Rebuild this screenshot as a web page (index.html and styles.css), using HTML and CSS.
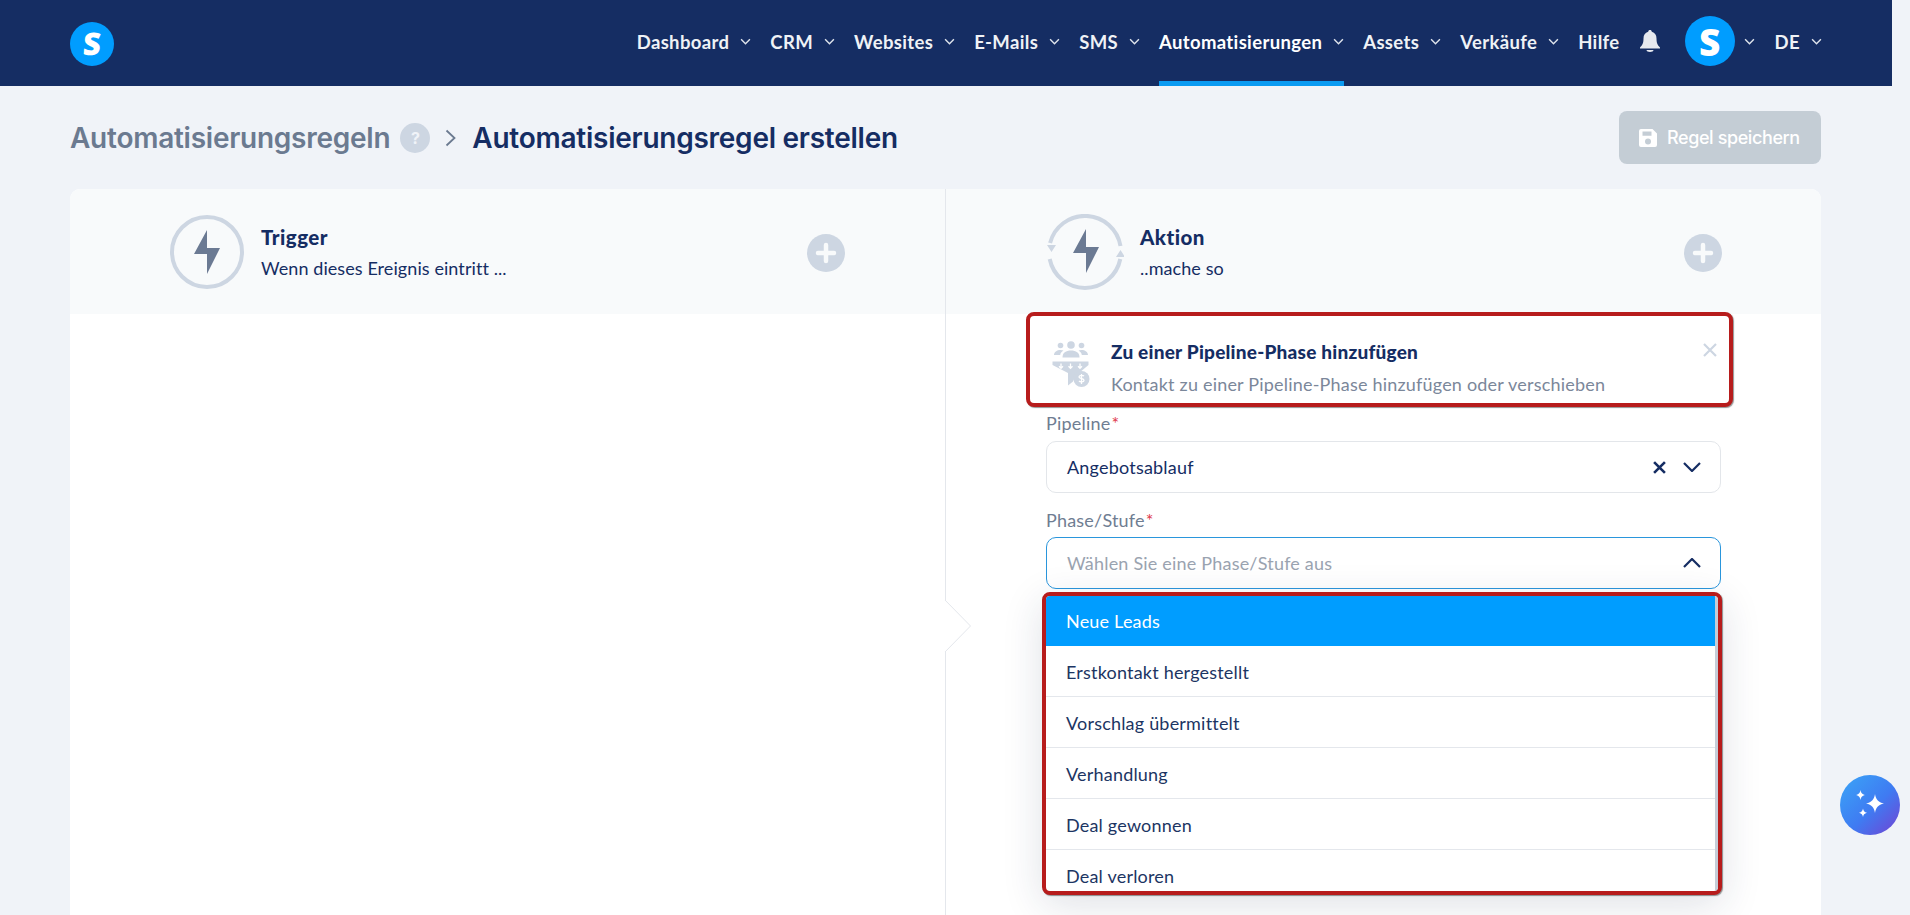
FILE: index.html
```html
<!DOCTYPE html>
<html lang="de">
<head>
<meta charset="utf-8">
<title>Automatisierungsregel erstellen</title>
<link rel="stylesheet" href="styles.css">
</head>
<body>
<div class="page">
  <header class="topbar">
    <div class="logo"><span class="logo-s">S</span></div>
    <nav class="nav">
      <a class="nav-item"><span>Dashboard</span><svg class="chev" viewBox="0 0 10 6"><path d="M1 1l4 4 4-4"/></svg></a>
      <a class="nav-item"><span>CRM</span><svg class="chev" viewBox="0 0 10 6"><path d="M1 1l4 4 4-4"/></svg></a>
      <a class="nav-item"><span>Websites</span><svg class="chev" viewBox="0 0 10 6"><path d="M1 1l4 4 4-4"/></svg></a>
      <a class="nav-item"><span>E-Mails</span><svg class="chev" viewBox="0 0 10 6"><path d="M1 1l4 4 4-4"/></svg></a>
      <a class="nav-item"><span>SMS</span><svg class="chev" viewBox="0 0 10 6"><path d="M1 1l4 4 4-4"/></svg></a>
      <a class="nav-item active"><span>Automatisierungen</span><svg class="chev" viewBox="0 0 10 6"><path d="M1 1l4 4 4-4"/></svg></a>
      <a class="nav-item"><span>Assets</span><svg class="chev" viewBox="0 0 10 6"><path d="M1 1l4 4 4-4"/></svg></a>
      <a class="nav-item"><span>Verkäufe</span><svg class="chev" viewBox="0 0 10 6"><path d="M1 1l4 4 4-4"/></svg></a>
      <a class="nav-item"><span>Hilfe</span></a>
      <svg class="bell" viewBox="0 0 20 22"><path d="M10 0c1 0 1.700.7 1.800 1.700C15 2.500 16.500 5 16.500 8.500c0 4.500 1 6.500 3.500 9v1H0v-1c2.500-2.500 3.500-4.500 3.500-9C3.500 5 5 2.500 8.200 1.700 8.300.7 9 0 10 0z"/><path d="M6.500 20h7c0 1.200-1.500 2-3.500 2s-3.500-.8-3.500-2z"/></svg>
      <div class="avatar"><span class="avatar-s">S</span></div>
      <a class="nav-item lang-chev"><svg class="chev" viewBox="0 0 10 6"><path d="M1 1l4 4 4-4"/></svg></a>
      <a class="nav-item"><span>DE</span><svg class="chev" viewBox="0 0 10 6"><path d="M1 1l4 4 4-4"/></svg></a>
    </nav>
  </header>

  <div class="titlebar">
    <div class="crumbs">
      <span class="crumb-parent">Automatisierungsregeln</span>
      <span class="help">?</span>
      <svg class="crumb-sep" viewBox="0 0 11 18"><path d="M1.500 1.500L9.500 9l-8 7.500"/></svg>
      <span class="crumb-current">Automatisierungsregel erstellen</span>
    </div>
    <button class="save">
      <svg class="save-ico" viewBox="0 0 18 18"><path fill-rule="evenodd" d="M2 0h11.500L18 4.500V16a2 2 0 0 1-2 2H2a2 2 0 0 1-2-2V2a2 2 0 0 1 2-2zm1.500 2.500v4.200h9V2.500zM9 9.500a3 3 0 1 0 0 6 3 3 0 0 0 0-6z"/></svg>
      <span>Regel speichern</span>
    </button>
  </div>

  <main class="card">
    <section class="col col-left">
      <div class="col-head">
        <svg class="head-ico" viewBox="0 0 74 74"><circle class="ring" cx="37" cy="37" r="35"/><path class="bolt" d="M37 15L24 39H37V59L50 33H37z"/></svg>
        <div class="head-text">
          <div class="head-title">Trigger</div>
          <div class="head-sub">Wenn dieses Ereignis eintritt ...</div>
        </div>
        <svg class="plus" viewBox="0 0 38 38"><circle cx="19" cy="19" r="19"/><path d="M19 11v16M11 19h16"/></svg>
      </div>
    </section>

    <section class="col col-right">
      <div class="col-head">
        <svg class="head-ico action-ico" viewBox="0 0 78 76"><path class="ring" d="M4.100 29A36 36 0 0 1 74.500 32"/><path class="ring" d="M3.700 45A36 36 0 0 0 74.300 45"/><path class="tri" d="M1 31h9l-4.500 7zM70 43l4.500-7 4.500 7z"/><path class="bolt" d="M40 15L27 39H40V59L53 33H40z"/></svg>
        <div class="head-text">
          <div class="head-title">Aktion</div>
          <div class="head-sub">..mache so</div>
        </div>
        <svg class="plus" viewBox="0 0 38 38"><circle cx="19" cy="19" r="19"/><path d="M19 11v16M11 19h16"/></svg>
      </div>
      <svg class="notch" viewBox="0 0 28 54"><path class="notch-fill" d="M0 0L25.500 26 0 52z"/><path class="notch-line" d="M0 0L25.500 26 0 52"/></svg>
      <div class="col-body">
        <div class="action-box">
          <svg class="funnel" viewBox="0 0 38 48">
            <circle cx="19" cy="5" r="3.800"/><circle cx="8.500" cy="5.500" r="2.800"/><circle cx="29.500" cy="5.500" r="2.800"/>
            <path d="M2 15c0-3 3-5 6.500-5 1.300 0 2.200.2 3 .6-2 1.200-3 2.600-3.300 4.400zM36 15c0-3-3-5-6.500-5-1.300 0-2.200.2-3 .6 2 1.200 3 2.600 3.300 4.400z"/>
            <path d="M10.500 17.500c0-5 3.500-7 8.500-7s8.500 2 8.500 7z"/>
            <path d="M0.500 21.500h36v3.500L27 33v2.500a9 9 0 0 0-6 6L16 45.500V33L.5 25z"/>
            <circle cx="29.500" cy="39" r="8"/>
            <path class="funnel-cut" d="M9 23.500v4.500M18.500 23.500v4.500M28 23.500v4.500M7 26.300l2 2 2-2M16.500 26.300l2 2 2-2M26 26.300l2 2 2-2M32 36.200c-1-1.200-5-1.200-5 .8s5 1 5 3.200-4 2-5 .8M29.500 34v10"/>
          </svg>
          <div class="action-text">
            <div class="action-title">Zu einer Pipeline-Phase hinzufügen</div>
            <div class="action-sub">Kontakt zu einer Pipeline-Phase hinzufügen oder verschieben</div>
          </div>
          <svg class="action-close" viewBox="0 0 14 14"><path d="M1 1l12 12M13 1L1 13"/></svg>
        </div>

        <div class="field-label pipeline-label">Pipeline<span class="req">*</span></div>
        <div class="select">
          <span class="select-value">Angebotsablauf</span>
          <svg class="sel-x" viewBox="0 0 12 12"><path d="M1 1l10 10M11 1L1 11"/></svg>
          <svg class="sel-chev" viewBox="0 0 18 10"><path d="M1 1l8 8 8-8"/></svg>
        </div>

        <div class="field-label phase-label">Phase/Stufe<span class="req">*</span></div>
        <div class="select-wrap">
          <div class="select focused">
            <span class="select-placeholder">Wählen Sie eine Phase/Stufe aus</span>
            <svg class="sel-chev" viewBox="0 0 18 10"><path d="M1 9l8-8 8 8"/></svg>
          </div>
          <div class="menu">
            <ul class="menu-list">
              <li class="menu-row selected">Neue Leads</li>
              <li class="menu-row">Erstkontakt hergestellt</li>
              <li class="menu-row">Vorschlag übermittelt</li>
              <li class="menu-row">Verhandlung</li>
              <li class="menu-row">Deal gewonnen</li>
              <li class="menu-row">Deal verloren</li>
            </ul>
            <div class="menu-scroll"></div>
          </div>
        </div>
      </div>
    </section>
  </main>

  <button class="fab" aria-label="KI">
    <svg viewBox="0 0 32 32"><path d="M21 5c.9 5.500 3 8 9 9.500-6 1.500-8.100 4-9 9.500-.9-5.500-3-8-9-9.500 6-1.500 8.100-4 9-9.500z"/><path d="M6.500 1c.5 2.900 1.500 4.100 4.300 5-2.800.9-3.800 2.100-4.300 5-.5-2.900-1.500-4.100-4.300-5 2.800-.9 3.800-2.100 4.300-5z"/><path d="M9 19.500c.4 2.400 1.300 3.500 4 4.300-2.700.8-3.600 1.900-4 4.200-.4-2.300-1.300-3.400-4-4.200 2.700-.8 3.600-1.900 4-4.300z"/></svg>
  </button>
</div>
</body>
</html>
```

FILE: styles.css
```css
* { box-sizing: border-box; }
html, body { margin: 0; height: 915px; overflow: hidden; background: #f0f3f8; }
body { font-family: "Lato", "Noto Sans", sans-serif; color: #152d63; font-size: 18px; letter-spacing: .2px; }
.page { width: 1892px; height: 915px; }

.topbar { height: 86px; background: #152d63; display: flex; align-items: center; justify-content: space-between; padding: 0 70px; }
.logo { width: 44px; height: 44px; border-radius: 50%; background: #009dff; display: flex; align-items: center; justify-content: center; margin-top: 1px; }
.logo-s { font-family: "Open Sans", sans-serif; font-weight: 800; font-size: 31px; line-height: 1; color: #fff; transform: skewX(-4deg); letter-spacing: 0; }
.nav { display: flex; align-items: center; height: 86px; }
.nav-item { display: flex; align-items: center; height: 86px; padding-top: 2px; border-bottom: 5px solid transparent; color: #eff2f6; font-weight: 700; font-size: 18.500px; letter-spacing: .35px; margin-right: 19px; white-space: nowrap; }
.nav-item.active { border-bottom-color: #0a9bf2; color: #fff; }
.chev { width: 11px; height: 7px; margin-left: 11px; fill: none; stroke: #dfe4ec; stroke-width: 1.300; }
.bell { width: 20px; height: 22px; fill: #e6e9ef; margin-left: 1px; margin-right: 25px; margin-top: -4px; }
.avatar { width: 50px; height: 50px; border-radius: 50%; background: #009dff; display: flex; align-items: center; justify-content: center; margin-top: -4px; }
.avatar-s { font-family: "Open Sans", sans-serif; font-weight: 800; font-size: 37px; line-height: 1; color: #fff; letter-spacing: 0; }
.nav-item.lang-chev { margin-right: 20px; margin-left: -2px; }
.nav-item:last-child { margin-right: 0; }

.titlebar { height: 103px; margin: 0 71px 0 70px; display: flex; align-items: flex-start; justify-content: space-between; padding-top: 25px; }
.crumbs { display: flex; align-items: center; height: 53px; font-family: "Inter", sans-serif; font-weight: 600; font-size: 28px; letter-spacing: -.25px; white-space: nowrap; }
.crumb-parent { color: #6b7a90; }
.help { width: 30px; height: 30px; border-radius: 50%; background: #cdd6e2; color: #f0f3f8; font-size: 16px; font-weight: 700; display: flex; align-items: center; justify-content: center; margin-left: 10px; }
.crumb-sep { width: 11px; height: 18px; margin: 0 16px 0 15px; fill: none; stroke: #6b7a90; stroke-width: 1.800; }
.crumb-current { color: #152d63; }
.save { width: 202px; height: 53px; border: 0; border-radius: 8px; background: #c4cdd5; color: #fff; display: flex; align-items: center; padding: 0 0 0 20px; gap: 10px; font-family: "Inter", sans-serif; font-weight: 500; font-size: 18px; letter-spacing: -.4px; }
.save-ico { width: 18px; height: 18px; fill: #fff; }

.card { width: 1751px; height: 726px; margin-left: 70px; background: #fff; border-radius: 10px 10px 0 0; display: grid; grid-template-columns: 875px 876px; }
.col { position: relative; }
.col-right { border-left: 1px solid #e4e7ec; }
.col-head { height: 125px; background: #f8fafb; display: flex; align-items: center; padding: 0 100px; }
.col-left .col-head { border-radius: 10px 0 0 0; }
.col-right .col-head { border-radius: 0 10px 0 0; padding-right: 99px; }
.head-ico { width: 74px; height: 74px; flex: none; }
.action-ico { width: 78px; height: 76px; }
.ring { fill: none; stroke: #cdd6e2; stroke-width: 4; }
.tri { fill: #cdd6e2; }
.bolt { fill: #6b7a93; }
.head-text { margin-left: 17px; margin-top: 1px; flex: 1; }
.action-ico + .head-text { margin-left: 16px; }
.head-title { font-weight: 900; font-size: 20.500px; letter-spacing: .45px; line-height: 26px; }
.head-sub { line-height: 24px; margin-top: 6px; letter-spacing: .08px; }
.plus { width: 38px; height: 38px; flex: none; margin-top: 2px; }
.plus circle { fill: #cdd6e2; }
.plus path { stroke: #f8fafb; stroke-width: 4.500; stroke-linecap: round; }

.notch { position: absolute; left: -1px; top: 411px; width: 28px; height: 54px; overflow: visible; }
.notch-fill { fill: #fff; }
.notch-line { fill: none; stroke: #e4e7ec; stroke-width: 1; }

.col-body { padding: 0 100px; position: relative; }
.action-box { display: flex; align-items: flex-start; height: 95px; margin: -2px -12px 0 -20px; padding: 24px 0 0 22px; background: #fff; border: 4px solid #b71c1c; border-radius: 8px; box-shadow: 1px 1px 1px rgba(60, 60, 60, .55); position: relative; }
.funnel { width: 38px; height: 48px; fill: #cdd6e2; flex: none; margin-right: 21px; }
.funnel-cut { fill: none; stroke: #fff; stroke-width: 1.300; }
.action-title { font-weight: 900; font-size: 19px; letter-spacing: .22px; line-height: 24px; }
.action-sub { color: #7b879a; line-height: 24px; margin-top: 8px; white-space: nowrap; }
.action-close { position: absolute; right: 12px; top: 27px; width: 14px; height: 14px; fill: none; stroke: #cdd6e2; stroke-width: 2.200; }

.field-label { color: #6f7d92; line-height: 22px; }
.pipeline-label { margin-top: 5px; margin-bottom: 7px; }
.phase-label { margin-top: 16px; margin-bottom: 6px; }
.req { color: #e0394a; margin-left: 1px; }
.select-wrap { position: relative; }
.select { height: 52px; border: 1px solid #e3e6ea; border-radius: 10px; background: #fff; display: flex; align-items: center; padding: 0 18px 0 20px; }
.select.focused { border-color: #2a96dc; }
.select-value { flex: 1; }
.select-placeholder { flex: 1; color: #9aa3b0; }
.sel-x { width: 13px; height: 13px; fill: none; stroke: #152d63; stroke-width: 2.400; margin-right: 17px; }
.sel-chev { width: 18px; height: 10px; fill: none; stroke: #152d63; stroke-width: 2.200; margin-right: 1px; }

.menu { position: absolute; left: -4px; right: -1px; top: 55px; height: 303px; background: #fff; border: 4px solid #b71c1c; border-radius: 8px; box-shadow: 1px 1px 1px rgba(60, 60, 60, .55), 0 10px 40px rgba(30, 45, 80, .14); display: flex; overflow: hidden; }
.menu-list { list-style: none; margin: 0; padding: 0; flex: 1; overflow: hidden; }
.menu-scroll { width: 3px; background: #c5cdd8; }
.menu-row { height: 51px; padding: 1px 0 0 20px; display: flex; align-items: center; border-bottom: 1px solid #e4e7ec; color: #1c3563; }
.menu-row.selected { height: 50px; padding-top: 0; background: #009dff; color: #fff; border-bottom: 0; }
.menu-row:last-child { border-bottom: 0; }

.fab { position: absolute; left: 1840px; top: 775px; width: 60px; height: 60px; border: 0; border-radius: 50%; padding: 0; background: linear-gradient(135deg, #3b9ef6 10%, #3f7bf2 55%, #6d48d6 95%); display: flex; align-items: center; justify-content: center; }
.fab svg { width: 32px; height: 32px; fill: #fff; }
```
